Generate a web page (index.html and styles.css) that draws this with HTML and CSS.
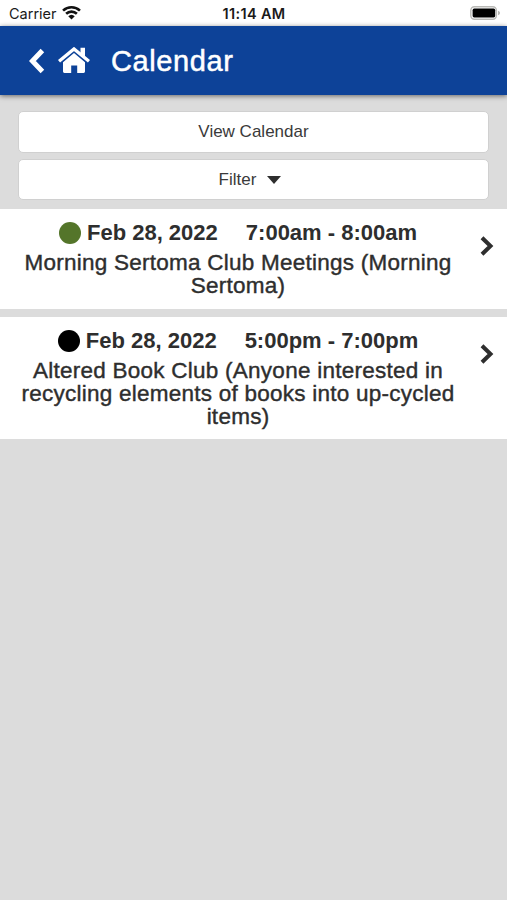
FILE: index.html
```html
<!DOCTYPE html>
<html lang="en">
  <head>
    <meta charset="UTF-8" />
    <meta name="viewport" content="width=device-width, initial-scale=1.0" />
    <title>Calendar</title>
    <link rel="stylesheet" href="styles.css">
  </head>
  <body>
    <div class="status-bar">
      <div class="status-left">
        <span class="carrier">Carrier</span>
        <svg class="wifi" viewBox="0 0 18 14" aria-hidden="true">
          <path d="M1 5.2a11.6 11.6 0 0 1 16 0M3.9 8.2a7.4 7.4 0 0 1 10.2 0" fill="none" stroke="#111" stroke-width="2.5" />
          <path d="M9 13.6 5.9 10.5a4.5 4.5 0 0 1 6.2 0z" fill="#111" />
        </svg>
      </div>
      <span class="clock">11:14 AM</span>
      <svg class="battery" viewBox="0 0 31 14" aria-hidden="true">
        <rect x=".8" y=".8" width="25.6" height="12.4" rx="3.6" fill="#fff" stroke="#b9b9b6" stroke-width="1.4" />
        <rect x="2.6" y="2.6" width="22.6" height="8.8" rx="1.6" fill="#000" />
        <path d="M28 4.8c1.500.5 2 1.300 2 2.200s-.5 1.700-2 2.200z" fill="#b9b9b6" />
      </svg>
    </div>

    <header class="header">
      <a class="back" href="#" aria-label="Back">
        <svg viewBox="0 0 16 26" width="16" height="26">
          <path d="M13.400 2.600 3.400 13l10 10.400" fill="none" stroke="#fff" stroke-width="5" />
        </svg>
      </a>
      <a class="home" href="#" aria-label="Home">
        <svg viewBox="0 0 32 27" width="32" height="27">
          <path d="M1 14.300 16 2l15 12.300" fill="none" stroke="#fff" stroke-width="3.400" />
          <path d="M22.500.8H27v10.500l-4.500-3.600z" fill="#fff" />
          <path d="M16 6 27 15.200v9.400q0 1.400-1.400 1.400h-6.400v-7.400h-6V26H6.400Q5 26 5 24.600v-9.400z" fill="#fff" />
        </svg>
      </a>
      <h1>Calendar</h1>
    </header>

    <main>
      <div class="actions">
        <button class="btn">View Calendar</button>
        <button class="btn filter">Filter <span class="caret"></span></button>
      </div>

      <ul class="events">
        <li class="event">
          <div class="event-text">
            <div class="event-when">
              <span class="dot green"></span>
              <span class="date">Feb 28, 2022</span>
              <span>7:00am - 8:00am</span>
            </div>
            <div class="event-title">Morning Sertoma Club Meetings (Morning Sertoma)</div>
          </div>
          <svg class="chevron" viewBox="0 0 14 20" aria-hidden="true">
            <path d="M2 1.700 10.500 10 2 18.300" />
          </svg>
        </li>
        <li class="event">
          <div class="event-text">
            <div class="event-when">
              <span class="dot black"></span>
              <span class="date">Feb 28, 2022</span>
              <span>5:00pm - 7:00pm</span>
            </div>
            <div class="event-title">Altered Book Club (Anyone interested in recycling elements of books into up-cycled items)</div>
          </div>
          <svg class="chevron" viewBox="0 0 14 20" aria-hidden="true">
            <path d="M2 1.700 10.500 10 2 18.300" />
          </svg>
        </li>
      </ul>
    </main>
  </body>
</html>
```

FILE: styles.css
```css
* {
  box-sizing: border-box;
}

body {
  margin: 0;
  min-height: 100vh;
  background: #dcdcdc;
  color: #2e2e2e;
  font-family: "Liberation Sans", Arial, sans-serif;
}

.status-bar {
  display: grid;
  grid-template-columns: 1fr auto 1fr;
  align-items: center;
  height: 26px;
  padding: 1px 8px 0 9px;
  background: #fff;
  color: #1a1a1a;
  font-family: Inter, sans-serif;
  font-size: 14.5px;
}

.status-left {
  display: flex;
  align-items: center;
  gap: 5px;
}

.wifi {
  width: 19px;
  height: 15px;
  margin-top: -2px;
}

.clock {
  font-weight: 600;
  letter-spacing: 0.35px;
}

.battery {
  width: 31px;
  height: 14px;
  margin: -1px -2px 0 0;
  justify-self: end;
}

.header {
  position: relative;
  display: flex;
  align-items: center;
  height: 69px;
  padding-left: 29px;
  background: #0d4298;
  box-shadow: 0 1px 5px rgba(0, 0, 0, 0.55);
}

.header svg {
  display: block;
}

.home {
  margin: 0 21px 0 13px;
}

.header h1 {
  margin: 1px 0 0;
  color: #fff;
  font-size: 29px;
  font-weight: normal;
  letter-spacing: 0.6px;
  -webkit-text-stroke: 0.5px #fff;
}

.actions {
  display: flex;
  flex-direction: column;
  gap: 6px;
  padding: 16px 18px 9px;
}

.btn {
  display: flex;
  align-items: center;
  justify-content: center;
  height: 41.5px;
  padding: 1px 0 0;
  border: 1px solid #d0d0d0;
  border-radius: 5px;
  background: #fff;
  color: #3a3a3a;
  font-family: inherit;
  font-size: 17px;
}

.filter {
  padding: 2px 7px 0 0;
}

.caret {
  margin-left: 11px;
  border: 7.5px solid transparent;
  border-top: 8px solid #2e2e2e;
  border-bottom: 0;
}

.events {
  display: flex;
  flex-direction: column;
  gap: 8px;
  margin: 0;
  padding: 0;
  list-style: none;
}

.event {
  display: flex;
  align-items: flex-start;
  padding: 11px 13px 11px 14px;
  background: #fff;
}

.event-text {
  flex: 1;
  text-align: center;
}

.event-when {
  display: flex;
  align-items: center;
  justify-content: center;
  height: 26px;
  margin-bottom: 5px;
  font-size: 22px;
  font-weight: bold;
}

.dot {
  width: 22px;
  height: 22px;
  margin-right: 6px;
  border-radius: 50%;
}

.green {
  background: #54752a;
}

.black {
  background: #000;
}

.date {
  margin-right: 28px;
}

.event-title {
  font-size: 22.5px;
  line-height: 23.3px;
  letter-spacing: 0.25px;
  -webkit-text-stroke: 0.4px #2e2e2e;
}

.chevron {
  width: 14px;
  height: 20px;
  margin: 16px 0 0 18px;
  fill: none;
  stroke: #2e2e2e;
  stroke-width: 4;
}
```
